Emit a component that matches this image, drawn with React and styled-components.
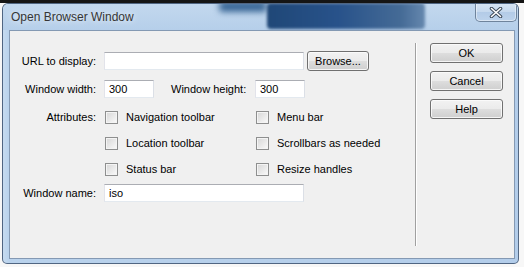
import React from "react";
import styled, { createGlobalStyle } from "styled-components";

const Global = createGlobalStyle`
  html, body { margin: 0; padding: 0; }
  body {
    width: 524px;
    height: 267px;
    overflow: hidden;
    background: linear-gradient(#151515 0px 3px, #f7f7f7 3px);
    font-family: "Liberation Sans", Arial, sans-serif;
  }
`;

const Screen = styled.div`
  box-sizing: border-box;
  width: 524px;
  height: 267px;
  padding: 3px 5px 3px 2px;
`;

const Window = styled.div`
  box-sizing: border-box;
  width: 517px;
  height: 261px;
  display: flex;
  flex-direction: column;
  border: 1px solid rgba(45, 65, 95, 0.75);
  border-radius: 6px 6px 5px 5px;
  overflow: hidden;
  background: linear-gradient(to right, #c6dbf0 0px, #b9d2ec 6px, #b3cdea 100%);
`;

const TitleBar = styled.div`
  position: relative;
  overflow: hidden;
  height: 26px;
  flex: none;
  display: flex;
  align-items: flex-start;
  padding-left: 8px;
  background: linear-gradient(to bottom, #c3d8ee, #b6cfea);
`;

const Reflection = styled.div`
  position: absolute;
  left: ${(p) => p.$left}px;
  top: ${(p) => p.$top}px;
  width: ${(p) => p.$width}px;
  height: ${(p) => p.$height}px;
  border-radius: 4px;
  background: ${(p) => p.$bg};
  filter: blur(${(p) => p.$blur}px);
`;

const Title = styled.div`
  position: relative;
  z-index: 1;
  font-size: 12px;
  line-height: 27px;
  color: #353535;
  text-shadow: 0 0 6px rgba(255, 255, 255, 0.9);
`;

const CloseButton = styled.div`
  position: relative;
  z-index: 1;
  margin-left: auto;
  margin-right: 1px;
  margin-top: -1px;
  width: 42px;
  height: 19px;
  box-sizing: border-box;
  border: 1px solid #6f849c;
  border-top: none;
  border-radius: 0 0 5px 5px;
  background: linear-gradient(to bottom, #d9e6f4 0%, #c5d8ee 50%, #b3cbe7 51%, #bdd3ec 100%);
  box-shadow: inset 0 0 0 1px rgba(255, 255, 255, 0.45);
  display: flex;
  align-items: center;
  justify-content: center;
`;

const Client = styled.div`
  box-sizing: border-box;
  flex: none;
  height: 229px;
  margin: 0 3px 0 6px;
  border: 1px solid #8499b3;
  background: #f0f0f0;
  display: flex;
  color: #000;
  font-size: 11px;
`;

const Form = styled.div`
  width: 405px;
  flex: none;
  box-sizing: border-box;
  padding: 20px 0 0 6px;
  display: grid;
  grid-template-columns: 80px 1fr;
  grid-template-rows: 28px 28px 26px 26px 24px 20px;
  column-gap: 8px;
  align-content: start;
  align-items: start;
`;

const Label = styled.div`
  height: 20px;
  display: flex;
  align-items: center;
  justify-content: flex-end;
  white-space: nowrap;
`;

const Field = styled.div`
  height: 20px;
  display: flex;
  align-items: center;
`;

const TextBox = styled.div`
  box-sizing: border-box;
  width: ${(p) => p.$width}px;
  height: 18px;
  background: #fff;
  border: 1px solid;
  border-color: #abadb3 #dbdfe6 #e3e9ef #e2e3ea;
  padding-left: 4px;
  display: flex;
  align-items: center;
  line-height: 1;
`;

const InlineLabel = styled.div`
  width: ${(p) => p.$width}px;
  padding-left: ${(p) => p.$pad}px;
  box-sizing: border-box;
  white-space: nowrap;
`;

const PushButton = styled.div`
  box-sizing: border-box;
  width: ${(p) => p.$width}px;
  height: 20px;
  margin-left: ${(p) => p.$ml || 0}px;
  border: 1px solid #707070;
  border-radius: 3px;
  background: linear-gradient(to bottom, #f2f2f2 0%, #ebebeb 48%, #dddddd 52%, #cfcfcf 100%);
  box-shadow: inset 0 0 0 1px rgba(252, 252, 252, 0.85);
  display: flex;
  align-items: center;
  justify-content: center;
  font-size: 11px;
  color: #000;
  white-space: nowrap;
`;

const CheckGrid = styled.div`
  height: 20px;
  display: grid;
  grid-template-columns: 151px auto;
  align-items: center;
`;

const CheckItem = styled.div`
  display: flex;
  align-items: center;
  gap: 8px;
  padding-left: 1px;
  white-space: nowrap;
`;

const Box = styled.span`
  box-sizing: border-box;
  width: 13px;
  height: 13px;
  flex: none;
  border: 1px solid #8e8f8f;
  background: linear-gradient(135deg, #d6d6d6 0%, #e8e8e8 50%, #fbfbfb 100%);
  box-shadow: inset 0 0 0 1px #f4f4f4;
`;

const Separator = styled.div`
  width: 1px;
  flex: none;
  margin: 12px 0 12px 0;
  background: #a0a0a0;
  box-shadow: 1px 0 0 #ffffff;
`;

const ButtonColumn = styled.div`
  display: flex;
  flex-direction: column;
  gap: 8px;
  padding: 12px 0 0 14px;
`;

const CloseGlyph = () => (
  <svg width="14" height="11" viewBox="0 0 14 11">
    <path d="M2.5 1.5 L11.5 9.5 M11.5 1.5 L2.5 9.5" stroke="#3d4a5a" strokeWidth="3.6" strokeLinecap="round" />
    <path d="M2.5 1.5 L11.5 9.5 M11.5 1.5 L2.5 9.5" stroke="#ffffff" strokeWidth="1.6" strokeLinecap="round" />
  </svg>
);

const Check = ({ children }) => (
  <CheckItem>
    <Box />
    <span>{children}</span>
  </CheckItem>
);

export default function App() {
  return (
    <>
      <Global />
      <Screen>
        <Window>
          <TitleBar>
            <Reflection $left={216} $top={-3} $width={48} $height={11} $blur={3} $bg="#3a6796" />
            <Reflection
              $left={264}
              $top={-1}
              $width={158}
              $height={26}
              $blur={1.5}
              $bg="linear-gradient(to right, #1f4777 0%, #28528a 45%, #456b96 85%, #6688ae 100%)"
            />
            <Title>Open Browser Window</Title>
            <CloseButton>
              <CloseGlyph />
            </CloseButton>
          </TitleBar>
          <Client>
            <Form>
              <Label>URL to display:</Label>
              <Field>
                <TextBox $width={200} />
                <PushButton $width={62} $ml={3}>Browse...</PushButton>
              </Field>

              <Label>Window width:</Label>
              <Field>
                <TextBox $width={50}>300</TextBox>
                <InlineLabel $width={101} $pad={17}>Window height:</InlineLabel>
                <TextBox $width={50}>300</TextBox>
              </Field>

              <Label>Attributes:</Label>
              <CheckGrid>
                <Check>Navigation toolbar</Check>
                <Check>Menu bar</Check>
              </CheckGrid>

              <div />
              <CheckGrid>
                <Check>Location toolbar</Check>
                <Check>Scrollbars as needed</Check>
              </CheckGrid>

              <div />
              <CheckGrid>
                <Check>Status bar</Check>
                <Check>Resize handles</Check>
              </CheckGrid>

              <Label>Window name:</Label>
              <Field>
                <TextBox $width={200}>iso</TextBox>
              </Field>
            </Form>
            <Separator />
            <ButtonColumn>
              <PushButton $width={73}>OK</PushButton>
              <PushButton $width={73}>Cancel</PushButton>
              <PushButton $width={73}>Help</PushButton>
            </ButtonColumn>
          </Client>
        </Window>
      </Screen>
    </>
  );
}
